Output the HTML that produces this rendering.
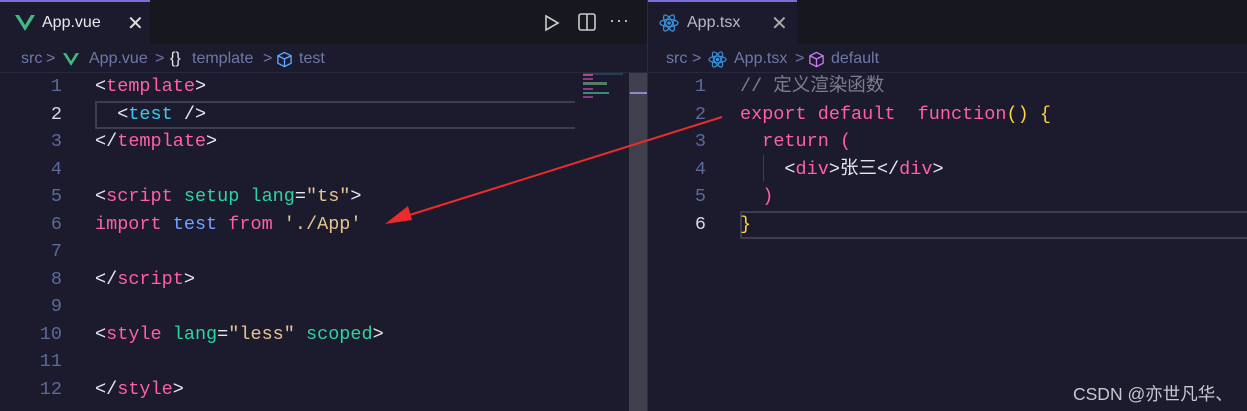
<!DOCTYPE html>
<html><head><meta charset="utf-8"><style>
*{margin:0;padding:0;box-sizing:border-box}
body{width:1247px;height:411px;background:#1b1b2d;overflow:hidden;position:relative;font-family:"Liberation Sans","Noto Sans CJK SC",sans-serif}
.abs{position:absolute}
.tabbar{top:0;height:44px;background:#17171f}
.tab{top:0;height:44px;background:#1b1b2d;border-top:2px solid #7b6fd6}
.tabt{font-size:16px;color:#e8e8ee;top:14px}
.bc{top:50px;font-size:16px;color:#6f78a8;white-space:pre}
.sep{top:72px;height:1px;background:#262a3a}
.ln{font-family:"Liberation Mono",monospace;font-size:18.5px;color:#5c6a9a;text-align:right;width:30px;height:27.5px;line-height:27.5px}
.code{font-family:"Liberation Mono","Noto Sans CJK SC",monospace;font-size:18.5px;line-height:27.5px;white-space:pre;color:#e6e6ee}
.p{color:#ff5fa8}.c{color:#3ec8ee}.b{color:#6da2ff}.g{color:#2ed3a0}.s{color:#e8c48e}.y{color:#ffd33d}.cm{color:#7d7d8c}.w{color:#e6e6ee}
</style></head><body>
<div class="abs tabbar" style="left:0;width:1247px"></div>
<div class="abs tab" style="left:0;width:150px"></div>
<svg class="abs" style="left:15px;top:15px" width="20" height="16" viewBox="0 0 20 16"><path d="M0 0h4l6 10 6-10h4L10 16z" fill="#42b883"/></svg>
<div class="abs tabt" style="left:42px">App.vue</div>
<div class="abs" style="left:127px;top:11px;color:#ddd;font-size:20px">✕</div>
<svg class="abs" style="left:544px;top:14px" width="16" height="18" viewBox="0 0 16 18"><path d="M2 2L14 9 2 16z" fill="none" stroke="#ccc" stroke-width="1.6"/></svg>
<svg class="abs" style="left:578px;top:13px" width="18" height="18" viewBox="0 0 18 18"><rect x="1" y="1" width="16" height="16" rx="2" fill="none" stroke="#ccc" stroke-width="1.6"/><path d="M9 1v16" stroke="#ccc" stroke-width="1.6"/></svg>
<div class="abs" style="left:609px;top:10px;color:#ccc;font-size:18px;letter-spacing:1px">···</div>
<div class="abs tab" style="left:648px;width:149px"></div>
<svg class="abs" style="left:659px;top:14px" width="20" height="18" viewBox="-10 -9 20 18"><g fill="none" stroke="#3a8fd8" stroke-width="1.3"><ellipse rx="9" ry="3.5"/><ellipse rx="9" ry="3.5" transform="rotate(60)"/><ellipse rx="9" ry="3.5" transform="rotate(120)"/></g><circle r="1.8" fill="#3a8fd8"/></svg>
<div class="abs tabt" style="left:687px;color:#b8b8c8">App.tsx</div>
<div class="abs" style="left:771px;top:11px;color:#aaa;font-size:20px">✕</div>

<div class="abs" style="left:647px;top:0;width:1px;height:411px;background:#2a2c3c"></div>

<div class="abs bc" style="left:21px">src</div>
<div class="abs bc" style="left:46px">&gt;</div>
<svg class="abs" style="left:63px;top:53px" width="16" height="13" viewBox="0 0 20 16"><path d="M0 0h4l6 10 6-10h4L10 16z" fill="#42b883"/></svg>
<div class="abs bc" style="left:89px">App.vue</div>
<div class="abs bc" style="left:155px">&gt;</div>
<div class="abs bc" style="left:170px;color:#e6e6ee">{}</div>
<div class="abs bc" style="left:192px">template</div>
<div class="abs bc" style="left:263px">&gt;</div>
<svg class="abs" style="left:276px;top:51px" width="17" height="17" viewBox="0 0 18 17"><path d="M9 1l7 3.5v8L9 16 2 12.5v-8zM2 4.5L9 8l7-3.5M9 8v8" fill="none" stroke="#5fa8ff" stroke-width="1.4"/></svg>
<div class="abs bc" style="left:299px">test</div>

<div class="abs bc" style="left:666px">src</div>
<div class="abs bc" style="left:692px">&gt;</div>
<svg class="abs" style="left:708px;top:51px" width="19" height="17" viewBox="-10 -9 20 18"><g fill="none" stroke="#3a8fd8" stroke-width="1.3"><ellipse rx="9" ry="3.5"/><ellipse rx="9" ry="3.5" transform="rotate(60)"/><ellipse rx="9" ry="3.5" transform="rotate(120)"/></g><circle r="1.8" fill="#3a8fd8"/></svg>
<div class="abs bc" style="left:734px">App.tsx</div>
<div class="abs bc" style="left:795px">&gt;</div>
<svg class="abs" style="left:808px;top:51px" width="17" height="17" viewBox="0 0 18 17"><path d="M9 1l7 3.5v8L9 16 2 12.5v-8zM2 4.5L9 8l7-3.5M9 8v8" fill="none" stroke="#c67cf0" stroke-width="1.4"/></svg>
<div class="abs bc" style="left:831px">default</div>
<div class="abs sep" style="left:0;width:1247px"></div>

<div class="abs" style="left:629px;top:73px;width:18px;height:338px;background:#3f3f4e"></div>
<div class="abs" style="left:630px;top:92px;width:17px;height:2px;background:#8f86d8"></div>
<div class="abs" style="left:583px;top:73px;width:40px;height:2px;background:#2b3a5a"></div>
<div class="abs" style="left:583px;top:74px;width:10px;height:10px;background:linear-gradient(#b0488a 0 2px,transparent 2px 4px,#8a3a86 4px 6px,transparent 6px)"></div>
<div class="abs" style="left:583px;top:82px;width:24px;height:3px;background:#5a7a6a"></div>
<div class="abs" style="left:583px;top:88px;width:10px;height:2px;background:#8a3a86"></div>
<div class="abs" style="left:583px;top:92px;width:26px;height:2px;background:#3a8a7a"></div>
<div class="abs" style="left:583px;top:96px;width:10px;height:2px;background:#8a3a86"></div>

<div class="abs" style="left:95px;top:101px;width:480px;height:28px;border:2px solid #3d3d4d;border-right:none"></div>
<div class="abs" style="left:740px;top:211px;width:507px;height:28px;border:2px solid #3d3d4d;border-right:none"></div>
<div class="abs" style="left:763px;top:155px;width:1px;height:27px;background:#3d3d4d"></div>

<div class="abs" style="left:32px;top:73px">
<div class="ln">1</div><div class="ln" style="color:#d8d8e0">2</div><div class="ln">3</div><div class="ln">4</div><div class="ln">5</div><div class="ln">6</div><div class="ln">7</div><div class="ln">8</div><div class="ln">9</div><div class="ln">10</div><div class="ln">11</div><div class="ln">12</div>
</div>
<div class="abs code" style="left:95px;top:73px"><span class="w">&lt;</span><span class="p">template</span><span class="w">&gt;</span>
  <span class="w">&lt;</span><span class="c">test</span> <span class="w">/&gt;</span>
<span class="w">&lt;/</span><span class="p">template</span><span class="w">&gt;</span>

<span class="w">&lt;</span><span class="p">script</span> <span class="g">setup</span> <span class="g">lang</span><span class="w">=</span><span class="s">"ts"</span><span class="w">&gt;</span>
<span class="p">import</span> <span class="b">test</span> <span class="p">from</span> <span class="s">'./App'</span>

<span class="w">&lt;/</span><span class="p">script</span><span class="w">&gt;</span>

<span class="w">&lt;</span><span class="p">style</span> <span class="g">lang</span><span class="w">=</span><span class="s">"less"</span> <span class="g">scoped</span><span class="w">&gt;</span>

<span class="w">&lt;/</span><span class="p">style</span><span class="w">&gt;</span></div>

<div class="abs" style="left:676px;top:73px">
<div class="ln">1</div><div class="ln">2</div><div class="ln">3</div><div class="ln">4</div><div class="ln">5</div><div class="ln" style="color:#d8d8e0">6</div>
</div>
<div class="abs code" style="left:740px;top:73px"><span class="cm">// 定义渲染函数</span>
<span class="p">export</span> <span class="p">default</span>  <span class="p">function</span><span class="y">()</span> <span class="y">{</span>
  <span class="p">return</span> <span class="p">(</span>
    <span class="w">&lt;</span><span class="p">div</span><span class="w">&gt;张三&lt;/</span><span class="p">div</span><span class="w">&gt;</span>
  <span class="p">)</span>
<span class="y">}</span></div>

<svg class="abs" style="left:0;top:0" width="1247" height="411"><line x1="722" y1="117" x2="400" y2="218" stroke="#ee2b2b" stroke-width="2"/><path d="M385 224L408 206L412 220z" fill="#ee2b2b"/></svg>

<div class="abs" style="left:1073px;top:381px;font-size:17.5px;color:#c8c8d0">CSDN @亦世凡华、</div>
</body></html>
